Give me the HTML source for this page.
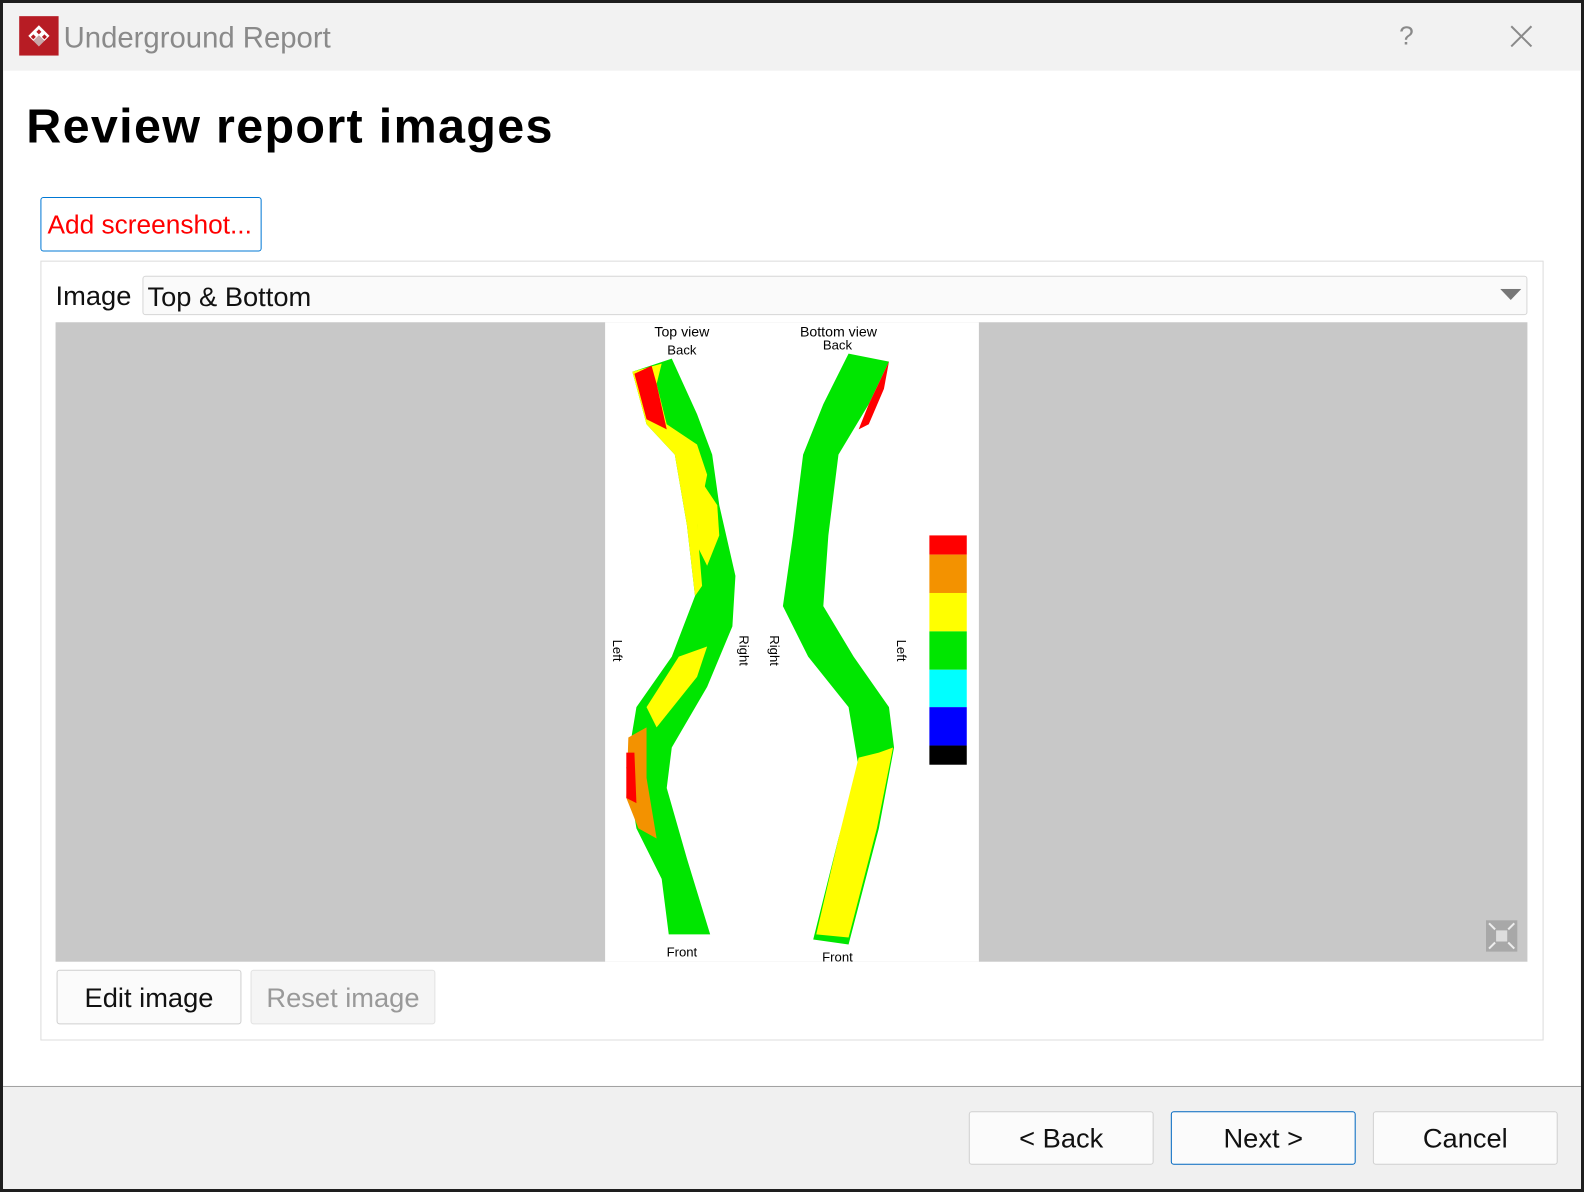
<!DOCTYPE html>
<html><head><meta charset="utf-8"><style>
html,body{margin:0;padding:0;width:1584px;height:1192px;overflow:hidden;background:#1e1e1e}
#s{position:absolute;left:0;top:0;width:1568px;height:1180px;transform:scale(1.0102);transform-origin:0 0;font-family:"Liberation Sans",sans-serif}
.a{position:absolute}
.win{left:3px;top:3px;width:1562px;height:1173px;background:#fff}
.btn{position:absolute;box-sizing:border-box;border:1px solid #d0d0d0;border-radius:3px;background:#fbfbfb;font-size:27px;text-align:center;color:#111}
</style></head><body><div id="s">
<div class="a win"></div>
<div class="a" style="left:3px;top:3px;width:1562px;height:67px;background:#f2f2f2"></div>
<div class="a" style="left:19px;top:16px;width:39px;height:39px;background:#b71c24"></div>
<svg class="a" style="left:19px;top:16px" width="39" height="39"><path d="M19.5 9 L30 19.5 L25 24.5 L19.5 19 L14 24.5 L9 19.5Z" fill="#fff"/><path d="M19.5 13 L22 15.5 L19.5 18 L17 15.5Z M14 18 L16.5 20.5 L14 23 L11.5 20.5Z M25 18 L27.5 20.5 L25 23 L22.5 20.5Z" fill="#b71c24"/><path d="M14 24.5 L19.5 30 L25 24.5 L19.5 19Z" fill="#ccc" opacity=".8"/></svg>
<div class="a" style="left:63px;top:22px;font-size:29px;color:#8a8a8a">Underground Report</div>
<div class="a" style="left:1385px;top:20px;font-size:26px;color:#8a8a8a">?</div>
<svg class="a" style="left:1494px;top:24px" width="24" height="24"><path d="M2 2L22 22M22 2L2 22" stroke="#8a8a8a" stroke-width="2"/></svg>
<div class="a" style="left:26px;top:98px;font-size:48px;font-weight:bold;color:#000;letter-spacing:1.3px">Review report images</div>
<div class="a" style="left:40px;top:195px;width:219px;height:54px;box-sizing:border-box;border:1px solid #0078d4;border-radius:3px;background:#fff;color:#f00;font-size:26px;line-height:52px;padding-left:6px">Add screenshot...</div>
<div class="a" style="left:40px;top:258px;width:1488px;height:772px;box-sizing:border-box;border:1px solid #dcdcdc"></div>
<div class="a" style="left:55px;top:278px;font-size:27px;color:#111">Image</div>
<div class="a" style="left:141px;top:273px;width:1371px;height:39px;box-sizing:border-box;border:1px solid #d6d6d6;border-radius:3px;background:#fafafa;font-size:27px;line-height:40px;padding-left:4px;color:#111">Top &amp; Bottom</div>
<svg class="a" style="left:1485px;top:286px" width="22" height="12"><path d="M0 0H21L10.5 11Z" fill="#777"/></svg>
<div class="a" style="left:55px;top:319px;width:1457px;height:633px;background:#c8c8c8"></div>
<div class="a" style="left:599px;top:319px;width:370px;height:633px;background:#fff"></div>
<svg class="a" style="left:0;top:0" width="1568" height="1180" font-family="Liberation Sans,sans-serif">
<polygon points="626,368 640,420 668,450 680,520 688,590 665,650 630,700 620,760 630,820 655,870 662,925 703,925 680,850 660,780 665,740 700,680 725,620 728,570 712,500 705,450 690,410 665,355" fill="#00e600"/>
<polygon points="626,368 640,420 668,450 680,520 688,590 695,580 690,520 700,470 690,440 660,420 650,380 655,360" fill="#ffff00"/>
<polygon points="628,370 640,415 660,425 650,380 645,362" fill="#f00"/>
<polygon points="672,650 640,700 650,720 690,670 700,640" fill="#ffff00"/>
<polygon points="622,730 620,790 632,820 650,830 640,770 640,720" fill="#f39200"/>
<polygon points="620,745 620,790 630,795 628,745" fill="#f00"/>
<polygon points="690,470 710,500 712,530 700,560 690,540" fill="#ffff00"/>
<polygon points="840,350 815,400 795,450 785,530 775,600 800,650 840,700 850,760 830,830 805,930 840,935 870,820 885,740 880,700 845,650 815,600 820,530 830,450 860,400 880,358" fill="#00e600"/>
<polygon points="850,750 830,830 808,925 840,928 868,820 884,740 870,745" fill="#ffff00"/>
<polygon points="880,358 860,400 850,425 860,420 875,385" fill="#f00"/>
<rect x="920" y="530" width="37" height="19" fill="#f00"/><rect x="920" y="549" width="37" height="38" fill="#f39200"/><rect x="920" y="587" width="37" height="38" fill="#ff0"/><rect x="920" y="625" width="37" height="38" fill="#00e600"/><rect x="920" y="663" width="37" height="37" fill="#0ff"/><rect x="920" y="700" width="37" height="38" fill="#00f"/><rect x="920" y="738" width="37" height="19" fill="#000"/>
<g font-size="14" fill="#000" text-anchor="middle">
<text x="675" y="333">Top view</text><text x="675" y="351" font-size="13">Back</text><text x="675" y="947" font-size="13">Front</text>
<text x="830" y="333">Bottom view</text><text x="829" y="346" font-size="13">Back</text><text x="829" y="952" font-size="13">Front</text>
<text transform="translate(607,644) rotate(90)" font-size="13">Left</text>
<text transform="translate(732,644) rotate(90)" font-size="13">Right</text>
<text transform="translate(762,644) rotate(90)" font-size="13">Right</text>
<text transform="translate(888,644) rotate(90)" font-size="13">Left</text>
</g>
<rect x="1471" y="911" width="31" height="31" fill="#a8a8a8"/><rect x="1481" y="921" width="11" height="11" fill="#ddd"/>
<path d="M1474 914L1480 920M1499 914L1493 920M1474 939L1480 933M1499 939L1493 933" stroke="#eee" stroke-width="2"/>
</svg>
<div class="btn" style="left:56px;top:960px;width:183px;height:54px;line-height:54px">Edit image</div>
<div class="btn" style="left:248px;top:960px;width:183px;height:54px;line-height:54px;background:#f5f5f5;border-color:#e2e2e2;color:#999">Reset image</div>
<div class="a" style="left:3px;top:1075px;width:1562px;height:101px;background:#f0f0f0;border-top:1px solid #a0a0a0"></div>
<div class="btn" style="left:959px;top:1100px;width:183px;height:53px;line-height:53px">&lt; Back</div>
<div class="btn" style="left:1159px;top:1100px;width:183px;height:53px;line-height:53px;border-color:#0067c0">Next &gt;</div>
<div class="btn" style="left:1359px;top:1100px;width:183px;height:53px;line-height:53px">Cancel</div>
</div></body></html>
